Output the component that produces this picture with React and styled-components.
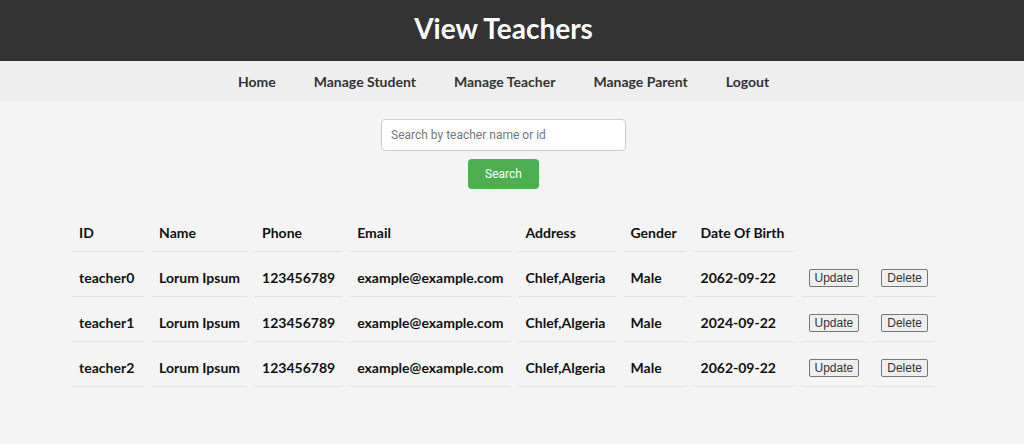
import React from "react";
import styled, { createGlobalStyle } from "styled-components";

const GlobalStyle = createGlobalStyle`
  html, body {
    margin: 0;
    padding: 0;
    background: #f4f4f4;
    font-family: "Lato", "Noto Sans", sans-serif;
  }
  * { box-sizing: border-box; }
`;

const Page = styled.div`
  min-height: 444px;
  background: #f4f4f4;
`;

const Header = styled.header`
  background: #333333;
  padding: 12px 17px 16px 0;
  display: flex;
  justify-content: center;
`;

const Title = styled.h1`
  margin: 0;
  color: #ffffff;
  font-size: 28px;
  line-height: 33px;
  font-weight: 700;
`;

const Nav = styled.nav`
  background: #eeeeee;
  height: 40px;
  padding-right: 17px;
  display: flex;
  justify-content: center;
  align-items: center;
  gap: 38px;
`;

const NavLink = styled.a`
  color: #333333;
  font-size: 14px;
  font-weight: 700;
  text-decoration: none;
  cursor: pointer;
`;

const Main = styled.main`
  padding: 18px 17px 0 0;
  display: flex;
  flex-direction: column;
  align-items: center;
`;

const SearchInput = styled.input`
  width: 245px;
  height: 32px;
  padding: 0 9px;
  border: 1px solid #cccccc;
  border-radius: 4px;
  background: #ffffff;
  font-family: "Roboto", "Liberation Sans", Arial, sans-serif;
  font-size: 12px;
  color: #333;
  outline: none;
  &::placeholder { color: #777777; }
`;

const SearchButton = styled.button`
  margin-top: 8px;
  width: 71px;
  height: 30px;
  border: none;
  border-radius: 4px;
  background: #4caf50;
  color: #ffffff;
  font-family: "Roboto", "Liberation Sans", Arial, sans-serif;
  font-size: 12px;
  cursor: pointer;
`;

const Table = styled.table`
  margin-top: 18px;
  border-collapse: separate;
  border-spacing: 8.5px 8px;
`;

const HeadCell = styled.th`
  width: ${(p) => (p.$w ? `${p.$w}px` : "auto")};
  padding: 10px 7px;
  line-height: 16px;
  font-size: 14px;
  font-weight: 700;
  text-align: left;
  color: #111111;
  border-bottom: 1px solid #e2e2e2;
  white-space: nowrap;
`;

const Cell = styled.td`
  padding: ${(p) => (p.$action ? "9px 7px" : "10px 7px")};
  line-height: 16px;
  font-size: 14px;
  font-weight: 700;
  color: #111111;
  border-bottom: 1px solid #e2e2e2;
  white-space: nowrap;
`;

const HeadBlank = styled.th`
  padding: 0;
`;

const ActionButton = styled.button`
  display: block;
  height: 18px;
  padding: 0 5px;
  font-family: "Liberation Sans", Arial, sans-serif;
  font-size: 12px;
  line-height: 16px;
  color: #333;
  background: #efefef;
  border: 1px solid #767676;
  border-radius: 2px;
  cursor: pointer;
`;

const teachers = [
  { id: "teacher0", dob: "2062-09-22" },
  { id: "teacher1", dob: "2024-09-22" },
  { id: "teacher2", dob: "2062-09-22" },
];

const columns = [
  { label: "ID", w: 72 },
  { label: "Name", w: 93 },
  { label: "Phone" },
  { label: "Email", w: 160 },
  { label: "Address", w: 97 },
  { label: "Gender", w: 62 },
  { label: "Date Of Birth", w: 100 },
];

export default function App() {
  return (
    <Page>
      <GlobalStyle />
      <Header>
        <Title>View Teachers</Title>
      </Header>
      <Nav>
        <NavLink>Home</NavLink>
        <NavLink>Manage Student</NavLink>
        <NavLink>Manage Teacher</NavLink>
        <NavLink>Manage Parent</NavLink>
        <NavLink>Logout</NavLink>
      </Nav>
      <Main>
        <SearchInput placeholder="Search by teacher name or id" />
        <SearchButton>Search</SearchButton>
        <Table>
          <thead>
            <tr>
              {columns.map((c) => (
                <HeadCell key={c.label} $w={c.w}>
                  {c.label}
                </HeadCell>
              ))}
              <HeadBlank />
              <HeadBlank />
            </tr>
          </thead>
          <tbody>
            {teachers.map((t) => (
              <tr key={t.id}>
                <Cell>{t.id}</Cell>
                <Cell>Lorum Ipsum</Cell>
                <Cell>123456789</Cell>
                <Cell>example@example.com</Cell>
                <Cell>Chlef,Algeria</Cell>
                <Cell>Male</Cell>
                <Cell>{t.dob}</Cell>
                <Cell $action>
                  <ActionButton>Update</ActionButton>
                </Cell>
                <Cell $action>
                  <ActionButton>Delete</ActionButton>
                </Cell>
              </tr>
            ))}
          </tbody>
        </Table>
      </Main>
    </Page>
  );
}
